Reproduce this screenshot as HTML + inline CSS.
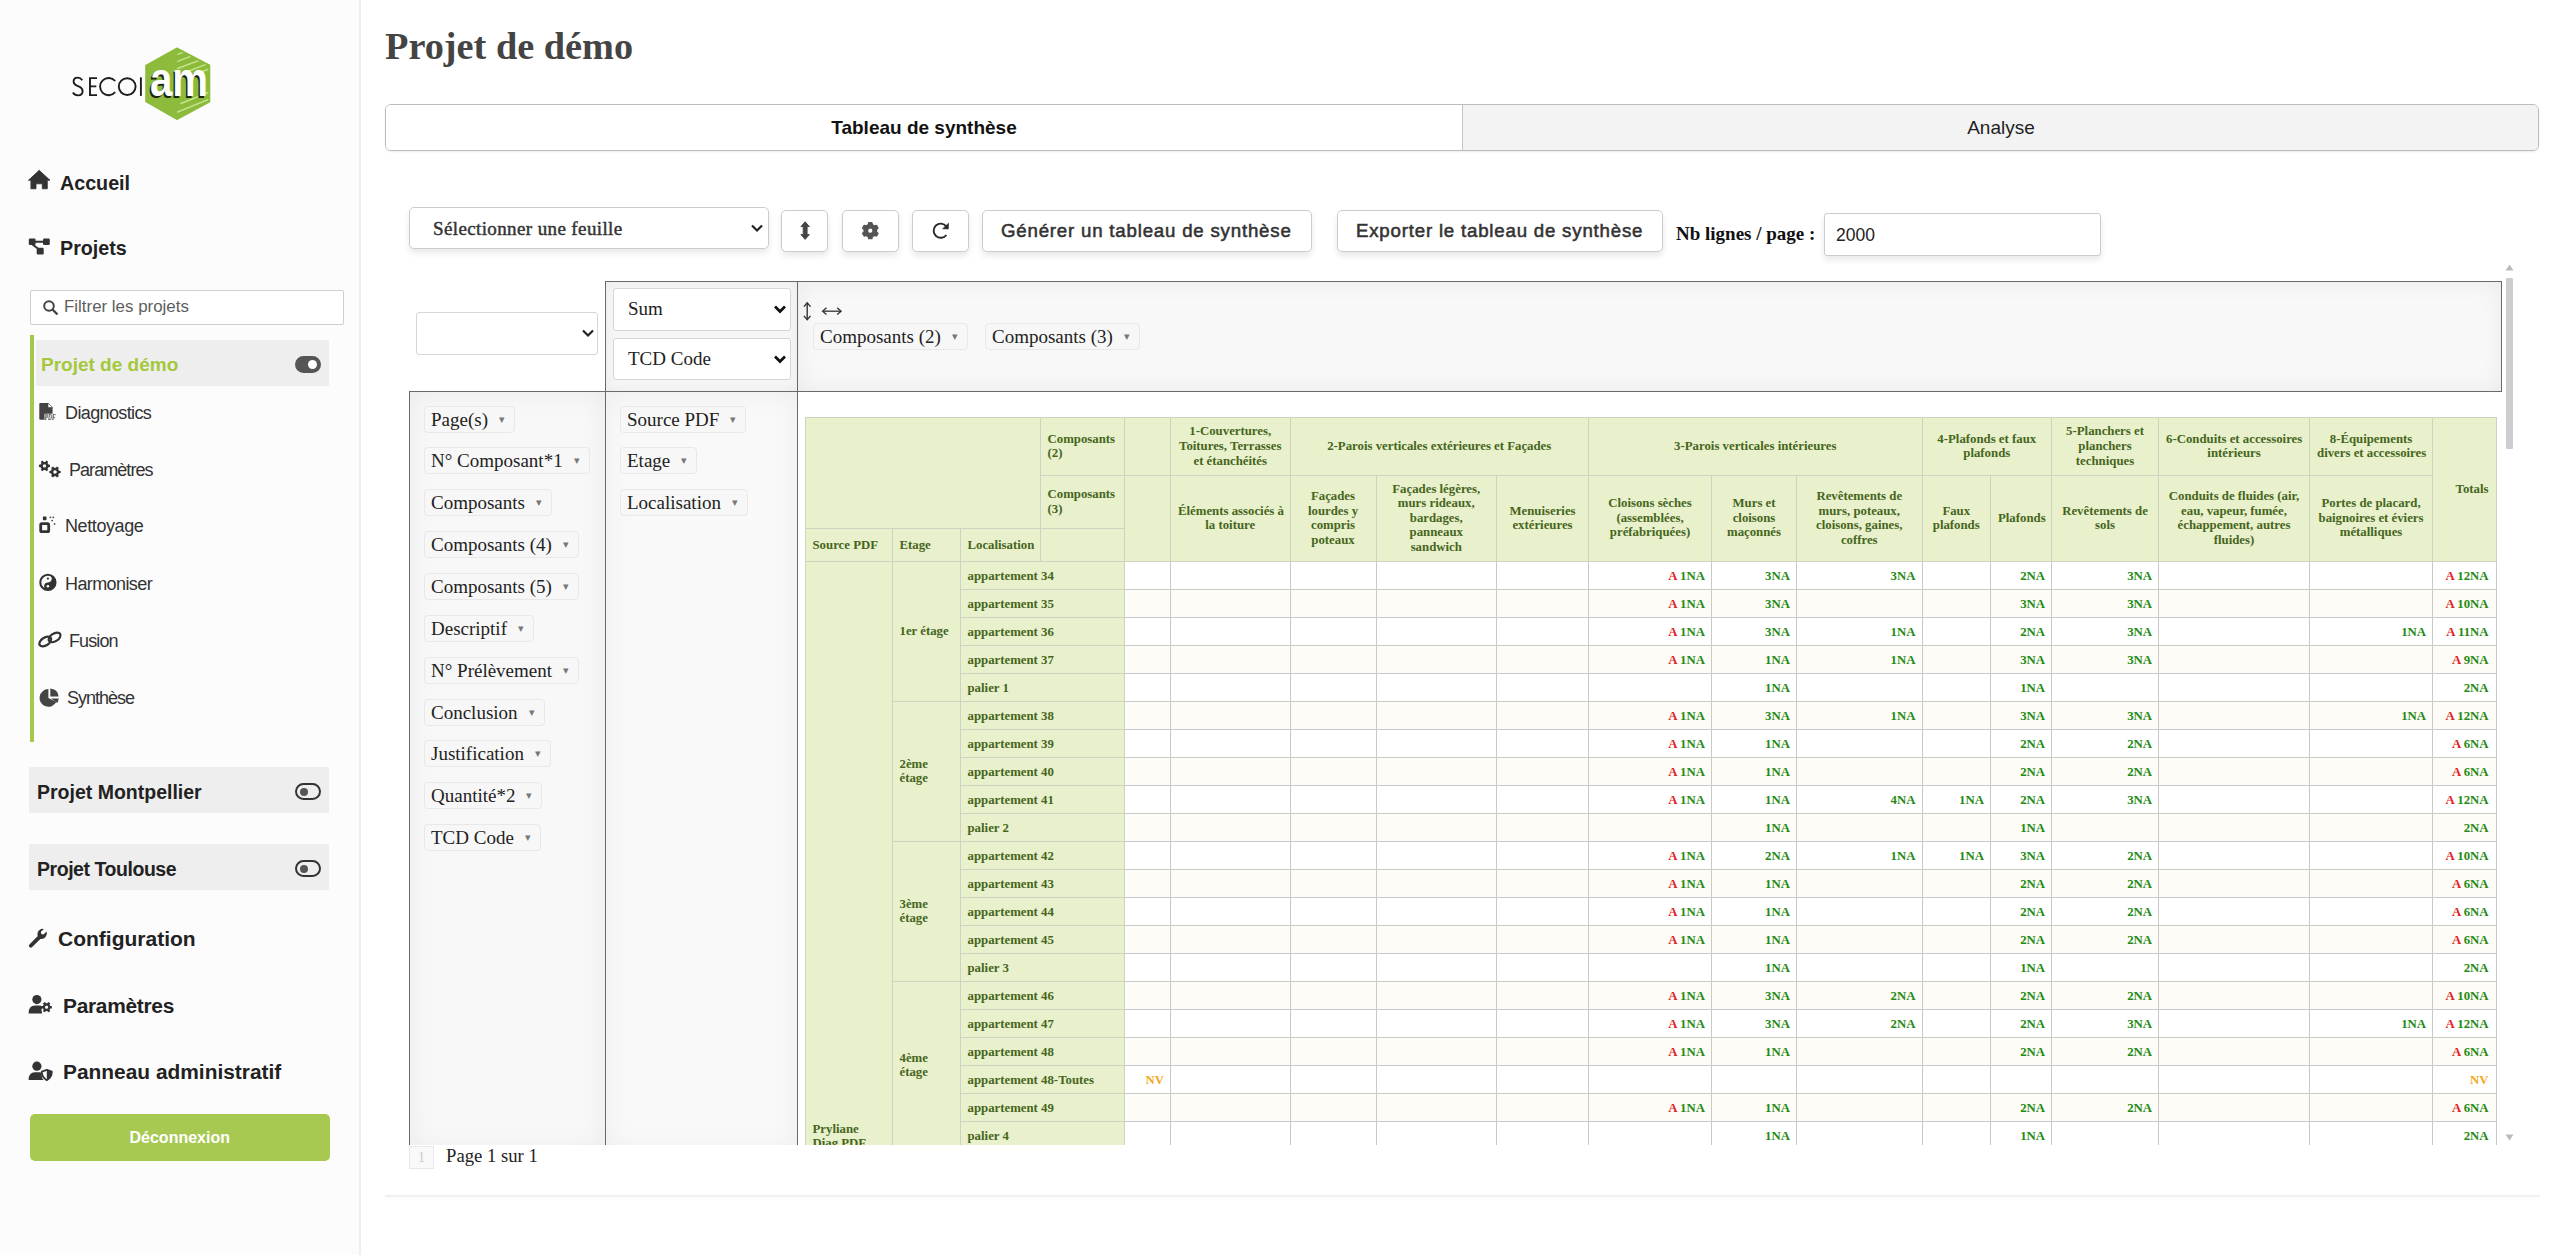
<!DOCTYPE html>
<html lang="fr">
<head>
<meta charset="utf-8">
<title>Projet de démo</title>
<style>
*{box-sizing:border-box;}
html,body{margin:0;padding:0;width:2560px;height:1255px;overflow:hidden;background:#fff;font-family:"Liberation Sans",sans-serif;color:#333;}
.abs{position:absolute;}
/* sidebar */
#side{position:absolute;left:0;top:0;width:361px;height:1255px;background:#fcfcfc;border-right:2px solid #eeeeee;}
.nav{position:absolute;font-weight:bold;color:#222;white-space:nowrap;}
.nav svg{position:absolute;}
.search{position:absolute;left:30px;top:290px;width:314px;height:35px;border:1px solid #cfcfcf;border-radius:2px;background:#fff;}
.search span{position:absolute;left:33px;top:6px;font-size:16.9px;color:#5e5e5e;}
.gbar{position:absolute;left:30px;top:335px;width:4px;height:407px;background:#a6c64c;}
.proj{position:absolute;left:36px;top:340px;width:293px;height:46px;background:#eeeeee;}
.proj b{position:absolute;left:5px;top:13.7px;font-size:19px;color:#a4c83c;}
.sub{position:absolute;font-size:18px;color:#333;white-space:nowrap;letter-spacing:-0.4px;}
.pbox{position:absolute;left:29px;width:300px;height:46px;background:#eeeeee;}
.pbox b{position:absolute;left:8px;top:14px;font-size:19.5px;color:#222;}
.tog{position:absolute;left:266px;top:16px;width:26px;height:17px;border:2.5px solid #333;border-radius:9px;}
.tog:after{content:"";position:absolute;left:3px;top:2.5px;width:8px;height:8px;border-radius:50%;background:#555;}
.logout{position:absolute;left:30px;top:1113.8px;width:299.5px;height:47px;background:#a7c952;border-radius:5px;color:#fff;font-weight:bold;font-size:16px;text-align:center;line-height:48px;}
/* main */
h1{position:absolute;left:385px;top:24px;margin:0;font-family:"Liberation Serif",serif;font-weight:bold;font-size:38.3px;color:#444;white-space:nowrap;}
.tabs{position:absolute;left:385px;top:104px;width:2154px;height:47px;border:1px solid #bcbcbc;border-radius:6px;overflow:hidden;box-shadow:0 1px 2px rgba(0,0,0,0.08);}
.tab1{position:absolute;left:0;top:0;width:1076px;height:45px;background:#fff;text-align:center;line-height:46px;font-weight:bold;font-size:19px;color:#111;}
.tab2{position:absolute;left:1076px;top:0;width:1077px;height:45px;background:#f3f3f3;border-left:1px solid #c4c4c4;text-align:center;line-height:46px;font-size:19px;color:#222;}
.sel{position:absolute;background:#fff;border:1px solid #cccccc;border-radius:5px;box-shadow:0 4px 6px rgba(0,0,0,0.09);}
.btn{position:absolute;background:#fff;border:1px solid #cccccc;border-radius:5px;box-shadow:0 4px 6px rgba(0,0,0,0.09);}
.btxt{position:absolute;font-weight:normal;font-size:18.67px;letter-spacing:0.8px;color:#333;white-space:nowrap;-webkit-text-stroke:0.55px #333;}
.chev{position:absolute;}
/* pivot ui */
.pbord{position:absolute;border:1px solid #777;}
.pvals{position:absolute;left:605px;top:281px;width:193px;height:111px;background:#f6f6f6;border:1px solid #6a6a6a;box-shadow:inset 0 0 14px rgba(0,0,0,0.05);}
.pcols{position:absolute;left:797px;top:281px;width:1705px;height:111px;background:#f8f8f8;border:1px solid #6a6a6a;box-shadow:inset 0 0 24px rgba(0,0,0,0.06);}
.punused{position:absolute;left:409px;top:391px;width:197px;height:760px;background:#f8f8f8;border:1px solid #6a6a6a;border-bottom:none;box-shadow:inset 0 0 30px rgba(0,0,0,0.06);}
.prows{position:absolute;left:605px;top:391px;width:193px;height:760px;background:#f9f9f9;border:1px solid #6a6a6a;border-bottom:none;box-shadow:inset 0 0 30px rgba(0,0,0,0.05);}
.chip{position:absolute;left:14px;height:27px;background:#f7f7f7;border:1px solid #e8e8e8;border-radius:4px;font-family:"Liberation Serif",serif;font-size:19px;color:#222;white-space:nowrap;padding:0 9px 0 6px;line-height:25px;}
.chip i{font-style:normal;font-size:11px;color:#777;margin-left:11px;position:relative;top:-3px;}
.psel{position:absolute;background:#fff;border:1px solid #d6d6d6;border-radius:3px;font-family:"Liberation Serif",serif;font-size:19px;color:#222;}
/* pivot table */
.pvt{position:absolute;left:804.5px;top:417px;width:1691px;border-collapse:collapse;table-layout:fixed;font-family:"Liberation Serif",serif;font-size:12.8px;font-weight:bold;}
.pvt th{white-space:nowrap;background:#e8f0cc;border:1px solid #cdd3c2;color:#46661c;padding:0 7px;font-weight:bold;line-height:14.6px;}
.pvt td{border:1px solid #c9c9c9;background:#fff;text-align:right;padding:7px 6px 0 6px;height:28px;vertical-align:top;line-height:14.6px;}
.pvt tr.odd td{background:#fdfcf7;}
.pvt td.tot{padding-right:7px;}
.pvt .h1 th{height:57.5px;}
.pvt .h2 th{height:53.5px;}
.pvt .h3 th{height:32.7px;}
.pvt th.cl{text-align:center;}
.pvt th.axl{text-align:left;}
.pvt th.rl{text-align:left;}
.pvt th.totl{text-align:right;}
.pvt th.loc,.pvt th.et{text-align:left;height:28px;}
.pvt th.loc{vertical-align:top;padding-top:7px;}
.pvt th.src{vertical-align:top;text-align:left;}
.srclab{position:relative;top:560px;}
.ra{color:#e0231f;}
.gn{color:#268a14;}
.nv{color:#f2a91c;}
.clip{position:absolute;left:380px;top:262px;width:2140px;height:883px;overflow:hidden;}
</style>
</head>
<body>
<div id="side">
  <!-- Accueil -->
  <div class="nav" style="left:60px;top:171.5px;font-size:19.7px;">Accueil</div>
  <!-- Projets -->
  <div class="nav" style="left:60px;top:236.5px;font-size:19.7px;">Projets</div>
  <div class="search"><svg class="abs" style="left:12px;top:8.5px" width="16" height="16" viewBox="0 0 16 16"><circle cx="6" cy="6" r="4.8" stroke="#444" stroke-width="2" fill="none"/><path d="M9.5 9.5 L14.5 14.5" stroke="#444" stroke-width="2.4"/></svg><span>Filtrer les projets</span></div>
  <div class="gbar"></div>
  <div class="proj"><b>Projet de démo</b><div class="tog" style="left:259px;top:16px;background:#555;border-color:#555;"><span style="position:absolute;left:11px;top:1.5px;width:9px;height:9px;border-radius:50%;background:#fff"></span></div></div>
  <!-- sub items -->
  <div class="sub" style="left:65px;top:403px;letter-spacing:-0.62px;">Diagnostics</div>
  <div class="sub" style="left:69px;top:460px;letter-spacing:-0.95px;">Paramètres</div>
  <div class="sub" style="left:65px;top:516px;">Nettoyage</div>
  <div class="sub" style="left:65px;top:574px;letter-spacing:-0.6px;">Harmoniser</div>
  <div class="sub" style="left:69px;top:631px;letter-spacing:-0.9px;">Fusion</div>
  <div class="sub" style="left:67px;top:688px;letter-spacing:-1px;">Synthèse</div>
  <!-- other projects -->
  <div class="pbox" style="top:767px;"><b>Projet Montpellier</b><div class="tog"></div></div>
  <div class="pbox" style="top:844px;"><b style="letter-spacing:-0.45px">Projet Toulouse</b><div class="tog"></div></div>
  <div class="nav" style="left:58px;top:927px;font-size:21px;">Configuration</div>
  <div class="nav" style="left:63px;top:994px;font-size:20.9px;letter-spacing:-0.28px;">Paramètres</div>
  <div class="nav" style="left:63px;top:1060px;font-size:20.9px;">Panneau administratif</div>
  <div class="logout">Déconnexion</div>
  <svg style="position:absolute;left:0;top:0;pointer-events:none" width="361" height="1255" viewBox="0 0 361 1255">
<!-- logo -->
<g fill="none" stroke="#1c1c1c" stroke-width="1.9">
<path d="M82.3 80.2 Q80.5 77.6 77.6 77.6 Q73.6 77.6 73.6 81.6 Q73.6 84.6 78 86.2 Q82.6 87.8 82.6 91.3 Q82.6 95.4 78 95.4 Q74.6 95.4 72.9 92.6"/>
<path d="M97 78.1 L90 78.1 L90 95.1 L97 95.1 M90 86.4 L96.3 86.4"/>
<path d="M115.2 81 A8.6 8.6 0 1 0 115.2 92.2"/>
<circle cx="127.2" cy="86.6" r="8.4"/>
<path d="M140.9 77.3 L140.9 95.9"/>
</g>
<path d="M176.8 48.5 L209.3 65.5 L209.3 101.5 L176.8 119 L146.2 101.5 L146.2 65.5 Z" fill="#8dbb3b" stroke="#8dbb3b" stroke-width="2" stroke-linejoin="round"/>
<clipPath id="hexclip"><path d="M176.8 49.5 L208.3 66 L208.3 101 L176.8 118 L147.2 101 L147.2 66 Z"/></clipPath>
<g stroke="#c8e592" stroke-width="1.4" stroke-linecap="round" opacity="0.95" clip-path="url(#hexclip)">
<line x1="177.6" y1="54.3" x2="192" y2="49"/><line x1="177.6" y1="61.3" x2="202" y2="52"/><line x1="177.6" y1="68.5" x2="212" y2="55.5"/><line x1="181" y1="74" x2="212" y2="62"/><line x1="185" y1="78" x2="212" y2="68"/>
<line x1="181" y1="103.5" x2="212" y2="91"/><line x1="177.6" y1="112" x2="212" y2="98"/>
</g>
<text x="148.5" y="97.5" font-family="Liberation Sans" font-weight="bold" font-size="48" textLength="58" lengthAdjust="spacingAndGlyphs" fill="#1d2510">am</text>
<text x="150" y="96" font-family="Liberation Sans" font-weight="bold" font-size="48" textLength="58" lengthAdjust="spacingAndGlyphs" fill="#ffffff">am</text>
<!-- home -->
<path d="M39.2 170.3 L50 180.3 L47.3 180.3 L47.3 188.8 L42.3 188.8 L42.3 183.8 L36 183.8 L36 188.8 L30.9 188.8 L30.9 180.3 L28.4 180.3 Z" fill="#333" stroke="#333" stroke-width="0.8" stroke-linejoin="round"/>
<!-- projects -->
<rect x="28.8" y="238.6" width="6.8" height="6.3" rx="1.2" fill="#333"/>
<rect x="43" y="238.6" width="6.8" height="6.3" rx="1.2" fill="#333"/>
<rect x="36.7" y="247.8" width="7" height="6.7" rx="1.2" fill="#333"/>
<path d="M35 241.7 L43.5 241.7 M32.5 244.5 L38.5 249" stroke="#333" stroke-width="2"/>
<!-- diagnostics file-pdf -->
<path d="M40.3 402.9 L48 402.9 L52.6 407.5 L52.6 413.8 L44.5 413.8 L44.5 419.7 L40.3 419.7 Q39.3 419.7 39.3 418.7 L39.3 403.9 Q39.3 402.9 40.3 402.9 Z" fill="#444"/>
<path d="M48 402.9 L48 407.5 L52.6 407.5 Z" fill="#fff" stroke="#444" stroke-width="0.6"/>
<text x="44.6" y="419.8" font-family="Liberation Serif" font-style="italic" font-weight="bold" font-size="7.4" fill="#444" textLength="11" lengthAdjust="spacingAndGlyphs">PDF</text>
<!-- gears -->
<path d="M48.39 464.61 L50.00 464.82 L50.00 466.98 L48.39 467.19 L47.56 468.63 L48.18 470.12 L46.31 471.20 L45.33 469.91 L43.67 469.91 L42.69 471.20 L40.82 470.12 L41.44 468.63 L40.61 467.19 L39.00 466.98 L39.00 464.82 L40.61 464.61 L41.44 463.17 L40.82 461.68 L42.69 460.60 L43.67 461.89 L45.33 461.89 L46.31 460.60 L48.18 461.68 L47.56 463.17 Z M46.20 465.90 A1.70 1.70 0 1 0 42.80 465.90 A1.70 1.70 0 1 0 46.20 465.90 Z" fill="#333" fill-rule="evenodd"/>
<path d="M59.08 470.65 L60.69 470.88 L60.69 473.12 L59.08 473.35 L58.21 474.86 L58.81 476.37 L56.88 477.49 L55.87 476.21 L54.13 476.21 L53.12 477.49 L51.19 476.37 L51.79 474.86 L50.92 473.35 L49.31 473.12 L49.31 470.88 L50.92 470.65 L51.79 469.14 L51.19 467.63 L53.12 466.51 L54.13 467.79 L55.87 467.79 L56.88 466.51 L58.81 467.63 L58.21 469.14 Z M56.80 472.00 A1.80 1.80 0 1 0 53.20 472.00 A1.80 1.80 0 1 0 56.80 472.00 Z" fill="#333" fill-rule="evenodd"/>
<!-- spray -->
<rect x="42.9" y="516.4" width="3.6" height="3.8" rx="0.6" fill="#333"/>
<rect x="40.7" y="523.6" width="8" height="8" rx="1.2" fill="none" stroke="#333" stroke-width="2.8"/>
<circle cx="50.4" cy="517.3" r="0.9" fill="#444"/><circle cx="53.3" cy="517.3" r="0.9" fill="#444"/><circle cx="52.1" cy="520.6" r="0.9" fill="#444"/><circle cx="54.6" cy="523.9" r="0.9" fill="#444"/>
<!-- yin yang -->
<circle cx="47.9" cy="582.4" r="7.6" fill="none" stroke="#333" stroke-width="2.1"/>
<path d="M47.9 574.8 A7.6 7.6 0 0 1 47.9 590 A3.8 3.8 0 0 1 47.9 582.4 A3.8 3.8 0 0 0 47.9 574.8 Z" fill="#333"/>
<circle cx="47.9" cy="578.6" r="1.1" fill="#333"/><circle cx="47.9" cy="586.2" r="1.3" fill="#fff"/>
<!-- link -->
<g fill="none" stroke="#333" stroke-width="2.2">
<ellipse cx="45.3" cy="641.5" rx="6.6" ry="3.9" transform="rotate(-33 45.3 641.5)"/>
<ellipse cx="54.6" cy="637.4" rx="6.6" ry="3.9" transform="rotate(-33 54.6 637.4)"/>
</g>
<!-- pie -->
<path d="M48.4 689 L48.4 697.9 L56.3 702.1 A8.9 8.9 0 1 1 48.4 689 Z" fill="#444"/>
<path d="M50.3 688.4 A8.4 8.4 0 0 1 58.6 696.6 L50.3 696.6 Z" fill="#444"/>
<path d="M51 698.6 L58.7 698.6 A8.6 8.6 0 0 1 57.2 703 Z" fill="#444"/>
<!-- wrench -->
<path d="M46.6 931.5 L43.5 934.4 L41.2 934.1 L40.9 931.8 L43.9 928.9 A5.6 5.6 0 0 0 37.6 936.3 L29.4 944.4 A1.8 1.8 0 0 0 32.2 947 L40.3 938.9 A5.6 5.6 0 0 0 46.6 931.5 Z" fill="#333"/>
<!-- user gear -->
<circle cx="36.9" cy="999.6" r="4.6" fill="#333"/>
<path d="M28.6 1013.4 Q28.6 1005.6 35 1005.6 L39 1005.6 Q41.2 1005.6 42.4 1006.4 Q40.6 1009.6 42.2 1013.4 Z" fill="#333"/>
<path d="M50.27 1005.88 L51.87 1006.02 L51.87 1008.38 L50.27 1008.52 L49.58 1009.72 L50.26 1011.17 L48.21 1012.35 L47.29 1011.04 L45.91 1011.04 L44.99 1012.35 L42.94 1011.17 L43.62 1009.72 L42.93 1008.52 L41.33 1008.38 L41.33 1006.02 L42.93 1005.88 L43.62 1004.68 L42.94 1003.23 L44.99 1002.05 L45.91 1003.36 L47.29 1003.36 L48.21 1002.05 L50.26 1003.23 L49.58 1004.68 Z M48.20 1007.20 A1.60 1.60 0 1 0 45.00 1007.20 A1.60 1.60 0 1 0 48.20 1007.20 Z" fill="#333" fill-rule="evenodd"/>
<!-- user shield -->
<circle cx="36.9" cy="1066.2" r="4.6" fill="#333"/>
<path d="M28.6 1080 Q28.6 1072.2 35 1072.2 L39 1072.2 Q40.4 1072.2 41.6 1072.6 L41.6 1075 Q41.8 1078.4 43.4 1080 Z" fill="#333"/>
<path d="M46.8 1069.8 L51.8 1071.6 Q51.8 1077.6 46.8 1080.2 Q41.8 1077.6 41.8 1071.6 Z" fill="none" stroke="#333" stroke-width="1.8" stroke-linejoin="round"/>
<path d="M46.8 1069.8 L51.8 1071.6 Q51.8 1077.6 46.8 1080.2 Z" fill="#333"/>
</svg>
</div>

<h1>Projet de démo</h1>
<div class="tabs"><div class="tab1">Tableau de synthèse</div><div class="tab2">Analyse</div></div>

<!-- toolbar -->
<div class="sel" style="left:409px;top:207px;width:360px;height:42px;"><span style="position:absolute;left:23px;top:9.5px;font-family:'Liberation Serif',serif;font-weight:normal;font-size:19px;letter-spacing:0.38px;-webkit-text-stroke:0.45px #333;color:#333;white-space:nowrap;">Sélectionner une feuille</span>
<svg class="chev" style="left:341px;top:16px" width="12" height="9" viewBox="0 0 12 9"><path d="M1 1.5 L6 6.5 L11 1.5" fill="none" stroke="#222" stroke-width="2.2"/></svg></div>
<div class="btn" style="left:781px;top:210.2px;width:47px;height:41.4px;"></div>
<div class="btn" style="left:842px;top:210.2px;width:57px;height:41.4px;"></div>
<div class="btn" style="left:912px;top:210.2px;width:57px;height:41.4px;"></div>
<svg style="position:absolute;left:770px;top:200px;pointer-events:none" width="200" height="60" viewBox="770 200 200 60">
<path d="M805.15 221.8 L809.4 226.6 L807.1 226.6 L807.1 234.6 L809.4 234.6 L805.15 239.4 L800.9 234.6 L803.2 234.6 L803.2 226.6 L800.9 226.6 Z" fill="#444" stroke="#444" stroke-width="0.9" stroke-linejoin="round"/>
<path d="M868.38 224.80 L868.80 222.84 L871.80 222.84 L872.22 224.80 L874.45 226.09 L876.36 225.47 L877.86 228.07 L876.36 229.41 L876.36 231.99 L877.86 233.33 L876.36 235.93 L874.45 235.31 L872.22 236.60 L871.80 238.56 L868.80 238.56 L868.38 236.60 L866.15 235.31 L864.24 235.93 L862.74 233.33 L864.24 231.99 L864.24 229.41 L862.74 228.07 L864.24 225.47 L866.15 226.09 Z M873.20 230.70 A2.90 2.90 0 1 0 867.40 230.70 A2.90 2.90 0 1 0 873.20 230.70 Z" fill="#555" fill-rule="evenodd" stroke="#555" stroke-width="1.6" stroke-linejoin="round"/>
<path d="M946.3 226.3 A7.1 7.1 0 1 0 946.4 235" fill="none" stroke="#2a2a2a" stroke-width="1.9"/>
<path d="M948.6 223.2 L948.3 229 L942.6 228.8 Z" fill="#2a2a2a" stroke="#2a2a2a" stroke-width="0.6" stroke-linejoin="round"/>
</svg>
<div class="btn" style="left:982px;top:210.2px;width:330px;height:41.4px;"><span class="btxt" style="left:18px;top:9px;">Générer un tableau de synthèse</span></div>
<div class="btn" style="left:1337px;top:210.2px;width:326px;height:41.4px;"><span class="btxt" style="left:18px;top:9px;">Exporter le tableau de synthèse</span></div>
<div class="abs" style="left:1676px;top:223.4px;font-family:'Liberation Serif',serif;font-weight:bold;font-size:19px;color:#111;white-space:nowrap;">Nb lignes / page :</div>
<div class="sel" style="left:1824px;top:213px;width:277px;height:42.5px;border-radius:3px;"><span style="position:absolute;left:11px;top:10.6px;font-size:17.5px;color:#222;">2000</span></div>

<!-- pivot scroll region -->
<div class="clip">
 <div style="position:absolute;left:-380px;top:-262px;width:2560px;height:1255px;">
  <div class="psel" style="left:416px;top:312px;width:182px;height:43px;"><svg class="chev" style="left:165px;top:16px" width="12" height="9" viewBox="0 0 12 9"><path d="M1 1.5 L6 6.5 L11 1.5" fill="none" stroke="#222" stroke-width="2.2"/></svg></div>
  <div class="pvals">
    <div class="psel" style="left:7px;top:6px;width:178px;height:43px;"><span style="position:absolute;left:14px;top:9px;">Sum</span><svg class="chev" style="left:160px;top:16px" width="12" height="9" viewBox="0 0 12 9"><path d="M1 1.5 L6 6.5 L11 1.5" fill="none" stroke="#111" stroke-width="2.7"/></svg></div>
    <div class="psel" style="left:7px;top:56px;width:178px;height:42px;"><span style="position:absolute;left:14px;top:9px;white-space:nowrap;">TCD Code</span><svg class="chev" style="left:160px;top:16px" width="12" height="9" viewBox="0 0 12 9"><path d="M1 1.5 L6 6.5 L11 1.5" fill="none" stroke="#111" stroke-width="2.7"/></svg></div>
  </div>
  <div class="pcols">
    <svg class="abs" style="left:0;top:0" width="60" height="50" viewBox="797 281 60 50"><path d="M806.2 302.5 L806.2 318" stroke="#333" stroke-width="1.4"/><path d="M802.9 305.6 L806.2 301.8 L809.5 305.6 M802.9 314.9 L806.2 318.7 L809.5 314.9" fill="none" stroke="#333" stroke-width="1.4"/><path d="M822 310.2 L840 310.2" stroke="#333" stroke-width="1.3"/><path d="M825.5 306.8 L821.6 310.2 L825.5 313.6 M836.2 306.8 L840.1 310.2 L836.2 313.6" fill="none" stroke="#333" stroke-width="1.3"/></svg>
    <div class="chip" style="left:15px;top:41px;"><span>Composants (2)</span><i>▾</i></div>
    <div class="chip" style="left:187px;top:41px;"><span>Composants (3)</span><i>▾</i></div>
  </div>
  <div class="punused"><div class="chip" style="top:13.60px"><span>Page(s)</span><i>▾</i></div><div class="chip" style="top:55.45px"><span>N° Composant*1</span><i>▾</i></div><div class="chip" style="top:97.30px"><span>Composants</span><i>▾</i></div><div class="chip" style="top:139.15px"><span>Composants (4)</span><i>▾</i></div><div class="chip" style="top:181.00px"><span>Composants (5)</span><i>▾</i></div><div class="chip" style="top:222.85px"><span>Descriptif</span><i>▾</i></div><div class="chip" style="top:264.70px"><span>N° Prélèvement</span><i>▾</i></div><div class="chip" style="top:306.55px"><span>Conclusion</span><i>▾</i></div><div class="chip" style="top:348.40px"><span>Justification</span><i>▾</i></div><div class="chip" style="top:390.25px"><span>Quantité*2</span><i>▾</i></div><div class="chip" style="top:432.10px"><span>TCD Code</span><i>▾</i></div></div>
  <div class="prows"><div class="chip" style="top:13.60px"><span>Source PDF</span><i>▾</i></div><div class="chip" style="top:55.45px"><span>Etage</span><i>▾</i></div><div class="chip" style="top:97.30px"><span>Localisation</span><i>▾</i></div></div>
  <table class="pvt">
<colgroup><col style="width:87px"><col style="width:68px"><col style="width:80px"><col style="width:84.5px"><col style="width:46.0px"><col style="width:119.5px"><col style="width:86px"><col style="width:120.5px"><col style="width:92.0px"><col style="width:123.0px"><col style="width:85.0px"><col style="width:125.5px"><col style="width:68.5px"><col style="width:61.0px"><col style="width:107.0px"><col style="width:151.0px"><col style="width:123.0px"><col style="width:63.5px"></colgroup>
<thead>
<tr class="h1"><th colspan="3" rowspan="2" class="corner"></th><th class="axl">Composants<br>(2)</th><th class="cl"></th><th class="cl">1-Couvertures,<br>Toitures, Terrasses<br>et étanchéités</th><th class="cl" colspan="3">2-Parois verticales extérieures et Façades</th><th class="cl" colspan="3">3-Parois verticales intérieures</th><th class="cl" colspan="2">4-Plafonds et faux<br>plafonds</th><th class="cl">5-Planchers et<br>planchers<br>techniques</th><th class="cl">6-Conduits et accessoires<br>intérieurs</th><th class="cl">8-Équipements<br>divers et accessoires</th><th class="totl" rowspan="3">Totals</th></tr>
<tr class="h2"><th class="axl">Composants<br>(3)</th><th class="cl" rowspan="2"></th><th class="cl" rowspan="2">Éléments associés à<br>la toiture</th><th class="cl" rowspan="2">Façades<br>lourdes y<br>compris<br>poteaux</th><th class="cl" rowspan="2">Façades légères,<br>murs rideaux,<br>bardages,<br>panneaux<br>sandwich</th><th class="cl" rowspan="2">Menuiseries<br>extérieures</th><th class="cl" rowspan="2">Cloisons sèches<br>(assemblées,<br>préfabriquées)</th><th class="cl" rowspan="2">Murs et<br>cloisons<br>maçonnés</th><th class="cl" rowspan="2">Revêtements de<br>murs, poteaux,<br>cloisons, gaines,<br>coffres</th><th class="cl" rowspan="2">Faux<br>plafonds</th><th class="cl" rowspan="2">Plafonds</th><th class="cl" rowspan="2">Revêtements de<br>sols</th><th class="cl" rowspan="2">Conduits de fluides (air,<br>eau, vapeur, fumée,<br>échappement, autres<br>fluides)</th><th class="cl" rowspan="2">Portes de placard,<br>baignoires et éviers<br>métalliques</th></tr>
<tr class="h3"><th class="rl">Source PDF</th><th class="rl">Etage</th><th class="rl">Localisation</th><th class="rl"></th></tr>
</thead>
<tbody>
<tr class="even"><th class="src" rowspan="21"><div class="srclab">Pryliane<br>Diag PDF</div></th><th class="et" rowspan="5">1er étage</th><th class="loc" colspan="2">appartement 34</th><td></td><td></td><td></td><td></td><td></td><td><span class="ra">A</span> <span class="gn">1NA</span></td><td><span class="gn">3NA</span></td><td><span class="gn">3NA</span></td><td></td><td><span class="gn">2NA</span></td><td><span class="gn">3NA</span></td><td></td><td></td><td class="tot"><span class="ra">A</span> <span class="gn">12NA</span></td></tr><tr class="odd"><th class="loc" colspan="2">appartement 35</th><td></td><td></td><td></td><td></td><td></td><td><span class="ra">A</span> <span class="gn">1NA</span></td><td><span class="gn">3NA</span></td><td></td><td></td><td><span class="gn">3NA</span></td><td><span class="gn">3NA</span></td><td></td><td></td><td class="tot"><span class="ra">A</span> <span class="gn">10NA</span></td></tr><tr class="even"><th class="loc" colspan="2">appartement 36</th><td></td><td></td><td></td><td></td><td></td><td><span class="ra">A</span> <span class="gn">1NA</span></td><td><span class="gn">3NA</span></td><td><span class="gn">1NA</span></td><td></td><td><span class="gn">2NA</span></td><td><span class="gn">3NA</span></td><td></td><td><span class="gn">1NA</span></td><td class="tot"><span class="ra">A</span> <span class="gn">11NA</span></td></tr><tr class="odd"><th class="loc" colspan="2">appartement 37</th><td></td><td></td><td></td><td></td><td></td><td><span class="ra">A</span> <span class="gn">1NA</span></td><td><span class="gn">1NA</span></td><td><span class="gn">1NA</span></td><td></td><td><span class="gn">3NA</span></td><td><span class="gn">3NA</span></td><td></td><td></td><td class="tot"><span class="ra">A</span> <span class="gn">9NA</span></td></tr><tr class="even"><th class="loc" colspan="2">palier 1</th><td></td><td></td><td></td><td></td><td></td><td></td><td><span class="gn">1NA</span></td><td></td><td></td><td><span class="gn">1NA</span></td><td></td><td></td><td></td><td class="tot"><span class="gn">2NA</span></td></tr><tr class="odd"><th class="et" rowspan="5">2ème<br>étage</th><th class="loc" colspan="2">appartement 38</th><td></td><td></td><td></td><td></td><td></td><td><span class="ra">A</span> <span class="gn">1NA</span></td><td><span class="gn">3NA</span></td><td><span class="gn">1NA</span></td><td></td><td><span class="gn">3NA</span></td><td><span class="gn">3NA</span></td><td></td><td><span class="gn">1NA</span></td><td class="tot"><span class="ra">A</span> <span class="gn">12NA</span></td></tr><tr class="even"><th class="loc" colspan="2">appartement 39</th><td></td><td></td><td></td><td></td><td></td><td><span class="ra">A</span> <span class="gn">1NA</span></td><td><span class="gn">1NA</span></td><td></td><td></td><td><span class="gn">2NA</span></td><td><span class="gn">2NA</span></td><td></td><td></td><td class="tot"><span class="ra">A</span> <span class="gn">6NA</span></td></tr><tr class="odd"><th class="loc" colspan="2">appartement 40</th><td></td><td></td><td></td><td></td><td></td><td><span class="ra">A</span> <span class="gn">1NA</span></td><td><span class="gn">1NA</span></td><td></td><td></td><td><span class="gn">2NA</span></td><td><span class="gn">2NA</span></td><td></td><td></td><td class="tot"><span class="ra">A</span> <span class="gn">6NA</span></td></tr><tr class="even"><th class="loc" colspan="2">appartement 41</th><td></td><td></td><td></td><td></td><td></td><td><span class="ra">A</span> <span class="gn">1NA</span></td><td><span class="gn">1NA</span></td><td><span class="gn">4NA</span></td><td><span class="gn">1NA</span></td><td><span class="gn">2NA</span></td><td><span class="gn">3NA</span></td><td></td><td></td><td class="tot"><span class="ra">A</span> <span class="gn">12NA</span></td></tr><tr class="odd"><th class="loc" colspan="2">palier 2</th><td></td><td></td><td></td><td></td><td></td><td></td><td><span class="gn">1NA</span></td><td></td><td></td><td><span class="gn">1NA</span></td><td></td><td></td><td></td><td class="tot"><span class="gn">2NA</span></td></tr><tr class="even"><th class="et" rowspan="5">3ème<br>étage</th><th class="loc" colspan="2">appartement 42</th><td></td><td></td><td></td><td></td><td></td><td><span class="ra">A</span> <span class="gn">1NA</span></td><td><span class="gn">2NA</span></td><td><span class="gn">1NA</span></td><td><span class="gn">1NA</span></td><td><span class="gn">3NA</span></td><td><span class="gn">2NA</span></td><td></td><td></td><td class="tot"><span class="ra">A</span> <span class="gn">10NA</span></td></tr><tr class="odd"><th class="loc" colspan="2">appartement 43</th><td></td><td></td><td></td><td></td><td></td><td><span class="ra">A</span> <span class="gn">1NA</span></td><td><span class="gn">1NA</span></td><td></td><td></td><td><span class="gn">2NA</span></td><td><span class="gn">2NA</span></td><td></td><td></td><td class="tot"><span class="ra">A</span> <span class="gn">6NA</span></td></tr><tr class="even"><th class="loc" colspan="2">appartement 44</th><td></td><td></td><td></td><td></td><td></td><td><span class="ra">A</span> <span class="gn">1NA</span></td><td><span class="gn">1NA</span></td><td></td><td></td><td><span class="gn">2NA</span></td><td><span class="gn">2NA</span></td><td></td><td></td><td class="tot"><span class="ra">A</span> <span class="gn">6NA</span></td></tr><tr class="odd"><th class="loc" colspan="2">appartement 45</th><td></td><td></td><td></td><td></td><td></td><td><span class="ra">A</span> <span class="gn">1NA</span></td><td><span class="gn">1NA</span></td><td></td><td></td><td><span class="gn">2NA</span></td><td><span class="gn">2NA</span></td><td></td><td></td><td class="tot"><span class="ra">A</span> <span class="gn">6NA</span></td></tr><tr class="even"><th class="loc" colspan="2">palier 3</th><td></td><td></td><td></td><td></td><td></td><td></td><td><span class="gn">1NA</span></td><td></td><td></td><td><span class="gn">1NA</span></td><td></td><td></td><td></td><td class="tot"><span class="gn">2NA</span></td></tr><tr class="odd"><th class="et" rowspan="6">4ème<br>étage</th><th class="loc" colspan="2">appartement 46</th><td></td><td></td><td></td><td></td><td></td><td><span class="ra">A</span> <span class="gn">1NA</span></td><td><span class="gn">3NA</span></td><td><span class="gn">2NA</span></td><td></td><td><span class="gn">2NA</span></td><td><span class="gn">2NA</span></td><td></td><td></td><td class="tot"><span class="ra">A</span> <span class="gn">10NA</span></td></tr><tr class="even"><th class="loc" colspan="2">appartement 47</th><td></td><td></td><td></td><td></td><td></td><td><span class="ra">A</span> <span class="gn">1NA</span></td><td><span class="gn">3NA</span></td><td><span class="gn">2NA</span></td><td></td><td><span class="gn">2NA</span></td><td><span class="gn">3NA</span></td><td></td><td><span class="gn">1NA</span></td><td class="tot"><span class="ra">A</span> <span class="gn">12NA</span></td></tr><tr class="odd"><th class="loc" colspan="2">appartement 48</th><td></td><td></td><td></td><td></td><td></td><td><span class="ra">A</span> <span class="gn">1NA</span></td><td><span class="gn">1NA</span></td><td></td><td></td><td><span class="gn">2NA</span></td><td><span class="gn">2NA</span></td><td></td><td></td><td class="tot"><span class="ra">A</span> <span class="gn">6NA</span></td></tr><tr class="even"><th class="loc" colspan="2">appartement 48-Toutes</th><td><span class="nv">NV</span></td><td></td><td></td><td></td><td></td><td></td><td></td><td></td><td></td><td></td><td></td><td></td><td></td><td class="tot"><span class="nv">NV</span></td></tr><tr class="odd"><th class="loc" colspan="2">appartement 49</th><td></td><td></td><td></td><td></td><td></td><td><span class="ra">A</span> <span class="gn">1NA</span></td><td><span class="gn">1NA</span></td><td></td><td></td><td><span class="gn">2NA</span></td><td><span class="gn">2NA</span></td><td></td><td></td><td class="tot"><span class="ra">A</span> <span class="gn">6NA</span></td></tr><tr class="even"><th class="loc" colspan="2">palier 4</th><td></td><td></td><td></td><td></td><td></td><td></td><td><span class="gn">1NA</span></td><td></td><td></td><td><span class="gn">1NA</span></td><td></td><td></td><td></td><td class="tot"><span class="gn">2NA</span></td></tr>
</tbody>
</table>
 </div>
</div>
<!-- scrollbar -->
<div class="abs" style="left:2506px;top:278px;width:7px;height:171px;background:#cdcdcd;border-radius:1px;"></div>
<svg class="abs" style="left:2505px;top:264px" width="9" height="7" viewBox="0 0 9 7"><path d="M4.5 0.5 L8.5 6.5 L0.5 6.5 Z" fill="#bbb"/></svg>
<svg class="abs" style="left:2505px;top:1134px" width="9" height="7" viewBox="0 0 9 7"><path d="M4.5 6.5 L8.5 0.5 L0.5 0.5 Z" fill="#bbb"/></svg>

<!-- pagination -->
<div class="abs" style="left:409px;top:1146px;width:25px;height:23px;border:1px solid #e8e8e8;background:#f9f9f9;font-family:'Liberation Serif',serif;font-size:14px;color:#ccc;text-align:center;line-height:22px;">1</div>
<div class="abs" style="left:446px;top:1145.2px;font-family:'Liberation Serif',serif;font-size:18.67px;color:#222;white-space:nowrap;">Page 1 sur 1</div>
<div class="abs" style="left:385px;top:1195px;width:2155px;height:2px;background:#f0f0f0;box-shadow:0 1px 4px rgba(0,0,0,0.04);"></div>
</body>
</html>
